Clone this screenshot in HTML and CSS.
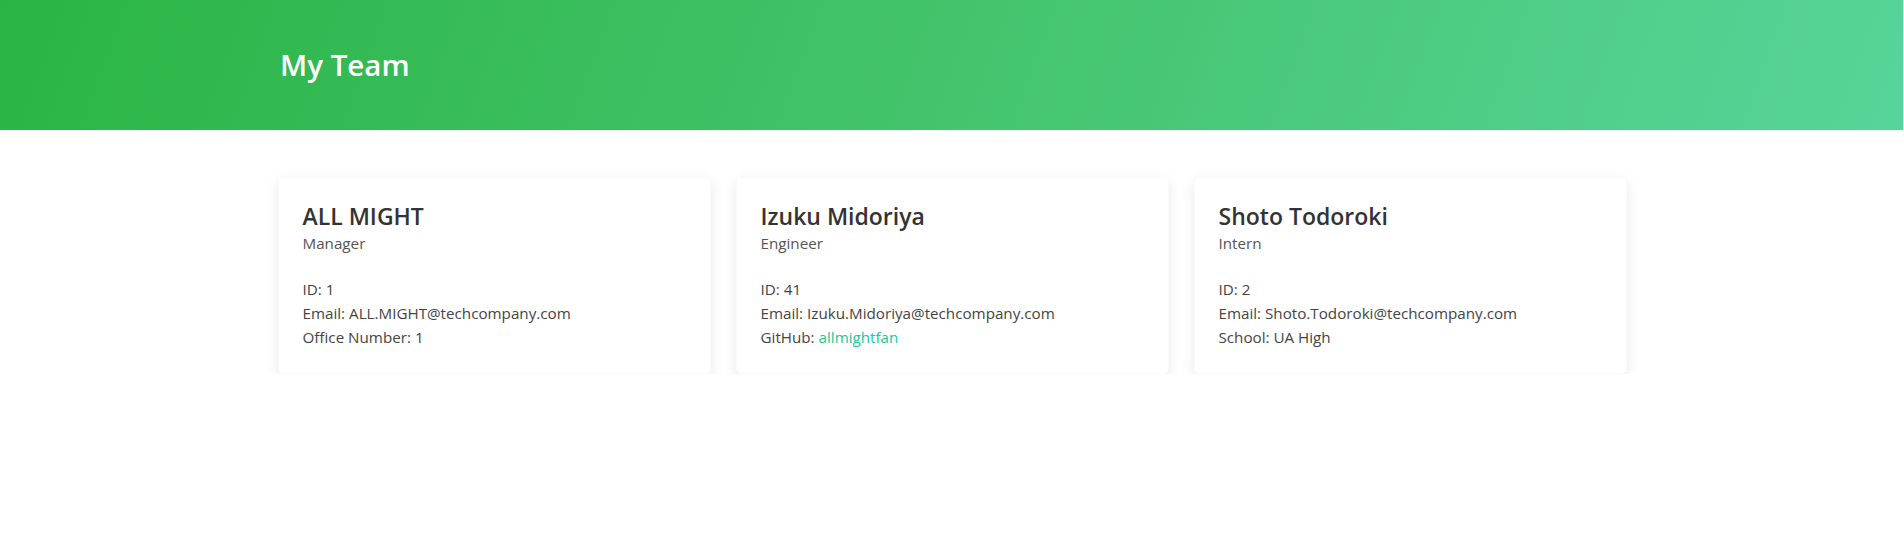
FILE: index.html
```html
<!DOCTYPE html>
<html lang="en">
<head>
<meta charset="utf-8">
<title>My Team</title>
<link rel="stylesheet" href="styles.css">
</head>
<body>
<header class="hero">
  <div class="container">
    <h1 class="hero-title">My Team</h1>
  </div>
</header>
<main class="container team">
  <article class="card">
    <h2 class="card-name">ALL MIGHT</h2>
    <p class="card-role">Manager</p>
    <ul class="card-info">
      <li>ID: 1</li>
      <li>Email: ALL.MIGHT@techcompany.com</li>
      <li>Office Number: 1</li>
    </ul>
  </article>
  <article class="card">
    <h2 class="card-name">Izuku Midoriya</h2>
    <p class="card-role">Engineer</p>
    <ul class="card-info">
      <li>ID: 41</li>
      <li>Email: Izuku.Midoriya@techcompany.com</li>
      <li>GitHub: <a class="link" href="#">allmightfan</a></li>
    </ul>
  </article>
  <article class="card">
    <h2 class="card-name">Shoto Todoroki</h2>
    <p class="card-role">Intern</p>
    <ul class="card-info">
      <li>ID: 2</li>
      <li>Email: Shoto.Todoroki@techcompany.com</li>
      <li>School: UA High</li>
    </ul>
  </article>
</main>
</body>
</html>
```

FILE: styles.css
```css
html, body {
  margin: 0;
  padding: 0;
  background: #fff;
}
body {
  font-family: "Open Sans", "Noto Sans", sans-serif;
  font-size: 15.2px;
  line-height: 24px;
  color: #444;
}
.container {
  width: 1349px;
  margin: 0 auto;
}
.hero {
  height: 130px;
  display: flex;
  align-items: center;
  background: linear-gradient(110deg, #2ab445 0%, #43c46c 50%, #57d49a 100%);
  margin-right: 1px;
}
.hero-title {
  margin: 0 0 0 3px;
  font-size: 29.5px;
  line-height: 36px;
  font-weight: 600;
  color: #fff;
}
.team {
  display: grid;
  grid-template-columns: repeat(3, 1fr);
  gap: 25px;
  margin-top: 47px;
}
.card {
  background: #fff;
  border: 1px solid rgba(0, 0, 0, 0.02);
  border-radius: 5px;
  padding: 24px;
  box-shadow: 0 4px 14px rgba(0, 0, 0, 0.09);
}
.card-name {
  margin: 0;
  font-size: 23px;
  line-height: 29px;
  font-weight: 600;
  color: #333;
}
.card-role {
  margin: 0;
  color: #555;
}
.card-info {
  list-style: none;
  margin: 22px 0 0;
  padding: 0;
}
.link {
  color: #20c997;
  text-decoration: none;
}
```
